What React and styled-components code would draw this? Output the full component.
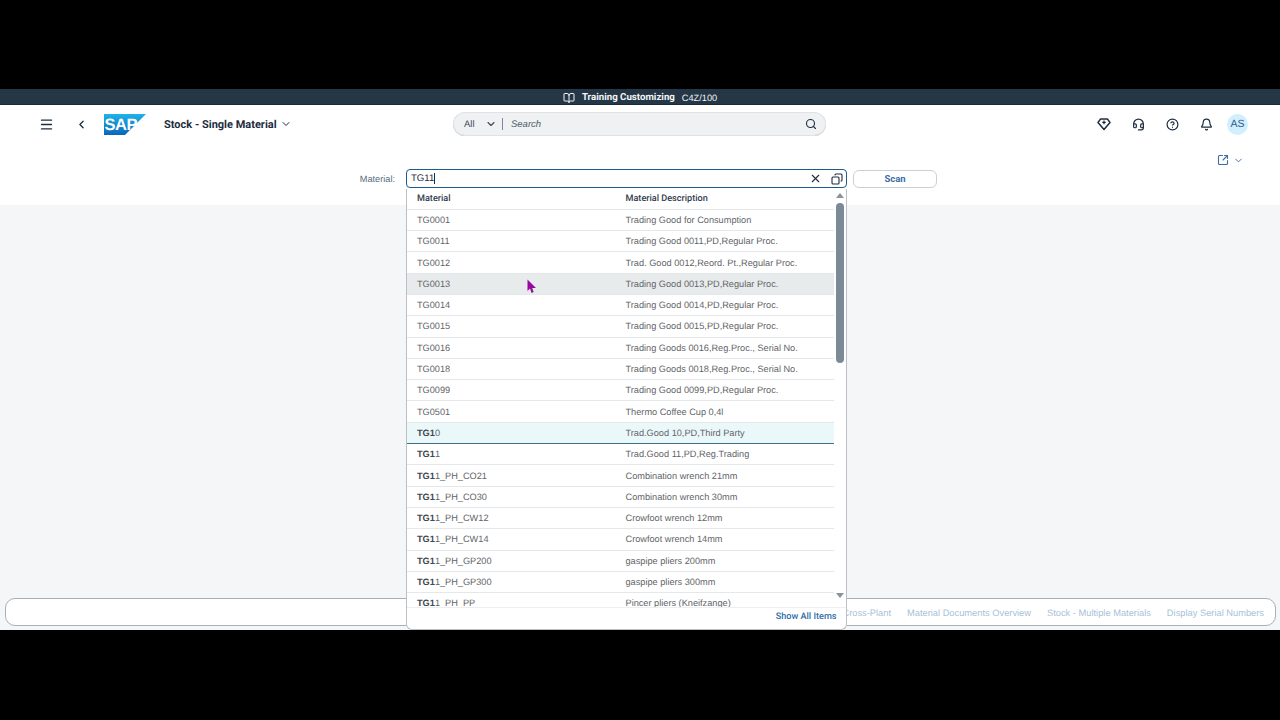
import React from 'react'
import styled, { createGlobalStyle } from 'styled-components'
import { Menu, ChevronLeft, ChevronDown, BookOpen, Search, Headset, CircleHelp, Bell, SquareArrowOutUpRight, X, Copy } from 'lucide-react'

const GlobalStyle = createGlobalStyle`
    html, body {
        margin: 0;
        padding: 0;
        background: #000;
        font-family: "Liberation Sans", Arial, sans-serif;
        text-rendering: geometricPrecision;
    }
`

const rows = [
    { id: 'TG0001', text: 'Trading Good for Consumption' },
    { id: 'TG0011', text: 'Trading Good 0011,PD,Regular Proc.' },
    { id: 'TG0012', text: 'Trad. Good 0012,Reord. Pt.,Regular Proc.' },
    { id: 'TG0013', text: 'Trading Good 0013,PD,Regular Proc.', state: 'hover' },
    { id: 'TG0014', text: 'Trading Good 0014,PD,Regular Proc.' },
    { id: 'TG0015', text: 'Trading Good 0015,PD,Regular Proc.' },
    { id: 'TG0016', text: 'Trading Goods 0016,Reg.Proc., Serial No.' },
    { id: 'TG0018', text: 'Trading Goods 0018,Reg.Proc., Serial No.' },
    { id: 'TG0099', text: 'Trading Good 0099,PD,Regular Proc.' },
    { id: 'TG0501', text: 'Thermo Coffee Cup 0,4l' },
    { id: '0', bold: 'TG1', text: 'Trad.Good 10,PD,Third Party', state: 'selected' },
    { id: '1', bold: 'TG1', text: 'Trad.Good 11,PD,Reg.Trading' },
    { id: '1_PH_CO21', bold: 'TG1', text: 'Combination wrench 21mm' },
    { id: '1_PH_CO30', bold: 'TG1', text: 'Combination wrench 30mm' },
    { id: '1_PH_CW12', bold: 'TG1', text: 'Crowfoot wrench 12mm' },
    { id: '1_PH_CW14', bold: 'TG1', text: 'Crowfoot wrench 14mm' },
    { id: '1_PH_GP200', bold: 'TG1', text: 'gaspipe pliers 200mm' },
    { id: '1_PH_GP300', bold: 'TG1', text: 'gaspipe pliers 300mm' },
    { id: '1_PH_PP', bold: 'TG1', text: 'Pincer pliers (Kneifzange)' },
]

const footerLinks = ['Stock - Cross-Plant', 'Material Documents Overview', 'Stock - Multiple Materials', 'Display Serial Numbers']

const SapLogo = () => (
    <svg width="42" height="21" viewBox="0 0 42 21">
        <defs>
            <linearGradient id="sapBlue" x1="0" y1="0" x2="0" y2="1">
                <stop offset="0" stopColor="#1fb3e8" />
                <stop offset="1" stopColor="#0b66b8" />
            </linearGradient>
        </defs>
        <polygon points="0,0 42,0 21,21 0,21" fill="url(#sapBlue)" />
        <text x="0.5" y="15.5" fill="#fff" fontFamily="Liberation Sans" fontWeight="700" fontSize="16.5" letterSpacing="-0.5">SAP</text>
    </svg>
)

const DiamondPlus = () => (
    <svg width="14" height="14" viewBox="0 0 14 14" fill="none" stroke="#1d2d3e" strokeWidth="1.5" strokeLinejoin="round">
        <path d="M3.6 2h6.8l2.6 3.4L7 12.5 1 5.4z" />
        <path d="M7 3.6v3.6M5.2 5.4h3.6" strokeWidth="1.2" />
    </svg>
)

const App = () => {
    return (
        <Screen>
            <GlobalStyle />
            <ShellBar>
                <BookOpen size={12} color="#f2f5f7" />
                <ShellTitle>Training Customizing</ShellTitle>
                <ShellSystem>C4Z/100</ShellSystem>
            </ShellBar>
            <Header>
                <HeaderLeft>
                    <Menu size={15} color="#1d2d3e" strokeWidth={2.2} />
                    <BackIcon size={13} color="#1d2d3e" strokeWidth={2.4} />
                    <LogoSlot><SapLogo /></LogoSlot>
                    <AppTitle>Stock - Single Material</AppTitle>
                    <ChevronDown size={12} color="#1d2d3e" strokeWidth={2} />
                </HeaderLeft>
                <SearchBox>
                    <ScopeLabel>All</ScopeLabel>
                    <ChevronDown size={12} color="#3b4a58" strokeWidth={2.2} />
                    <SearchDivider />
                    <SearchHint>Search</SearchHint>
                    <Search size={12} color="#1d2d3e" strokeWidth={2.2} />
                </SearchBox>
                <HeaderRight>
                    <DiamondPlus />
                    <Headset size={13} color="#1d2d3e" strokeWidth={2.2} />
                    <CircleHelp size={13} color="#1d2d3e" strokeWidth={2.2} />
                    <Bell size={13} color="#1d2d3e" strokeWidth={2.2} />
                    <Avatar>AS</Avatar>
                </HeaderRight>
            </Header>
            <SubHeader>
                <ShareRow>
                    <SquareArrowOutUpRight size={12} color="#3a6ea5" strokeWidth={2.2} />
                    <ChevronDown size={11} color="#3a6ea5" strokeWidth={2} />
                </ShareRow>
                <FormRow>
                    <FieldLabel>Material:</FieldLabel>
                    <Field>
                        <FieldValue>TG11<Caret /></FieldValue>
                        <X size={13} color="#1d2d3e" strokeWidth={2} />
                        <CopyIcon size={12} color="#1d2d3e" strokeWidth={2.2} />
                        <Popover>
                            <ListArea>
                                <Table>
                                    <HeadRow>
                                        <HeadCell>Material</HeadCell>
                                        <HeadCell>Material Description</HeadCell>
                                    </HeadRow>
                                    {rows.map((row) => (
                                        <Row key={row.bold ? row.bold + row.id : row.id} $state={row.state}>
                                            <Cell>{row.bold && <b>{row.bold}</b>}{row.id}</Cell>
                                            <Cell>{row.text}</Cell>
                                        </Row>
                                    ))}
                                </Table>
                                <Scrollbar>
                                    <ArrowUp />
                                    <Thumb />
                                    <ArrowDown />
                                </Scrollbar>
                            </ListArea>
                            <PopoverFooter>Show All Items</PopoverFooter>
                        </Popover>
                    </Field>
                    <ScanButton>Scan</ScanButton>
                </FormRow>
            </SubHeader>
            <Content>
                <LinkBar>
                    {footerLinks.map((link) => <LinkItem key={link}>{link}</LinkItem>)}
                </LinkBar>
            </Content>
            <Cursor width="10" height="15" viewBox="0 0 10 15">
                <polygon points="0.5,0.5 0.5,12 3,9.6 4.6,14 6.6,13 5.2,9 9,9" fill="#96089f" />
            </Cursor>
        </Screen>
    )
}

const Screen = styled.div`
    position: relative;
    box-sizing: border-box;
    width: 1280px;
    height: 720px;
    padding: 89px 0 90px;
    display: flex;
    flex-direction: column;
    background: #000;
    overflow: hidden;
`

const ShellBar = styled.div`
    height: 16px;
    flex: none;
    display: flex;
    align-items: center;
    justify-content: center;
    gap: 7px;
    background: #253746;
    border-bottom: 1px solid #1b2a36;
    box-sizing: border-box;
    color: #f2f5f7;
    padding-top: 2px;
`

const ShellTitle = styled.span`
    font-family: Roboto, sans-serif;
    font-size: 9.7px;
    font-weight: 700;
`

const ShellSystem = styled.span`
    font-size: 9.2px;
    font-weight: 400;
`

const Header = styled.div`
    height: 43px;
    flex: none;
    display: grid;
    grid-template-columns: 414px 373px 1fr;
    align-items: center;
    box-sizing: border-box;
    padding: 0 32px 5px 39px;
    background: #fff;
`

const HeaderLeft = styled.div`
    display: flex;
    align-items: center;
`

const BackIcon = styled(ChevronLeft)`
    margin-left: 21px;
`

const LogoSlot = styled.div`
    display: flex;
    margin: 0 18px 0 16px;
`

const AppTitle = styled.span`
    font-family: Roboto, sans-serif;
    font-size: 11px;
    font-weight: 700;
    color: #1d2d3e;
    margin-right: 3px;
`

const SearchBox = styled.div`
    height: 24px;
    display: flex;
    align-items: center;
    box-sizing: border-box;
    padding: 0 9px 0 11px;
    background: #eff1f2;
    border-radius: 12px;
    box-shadow: inset 0 0 0 1px #dfe3e6, inset 0 -1px 0 #a9b4be;
`

const ScopeLabel = styled.span`
    font-size: 9.5px;
    color: #3b4a58;
    width: 21px;
`

const SearchDivider = styled.span`
    width: 1px;
    height: 12px;
    background: #7f8b97;
    margin: 0 8px 0 5px;
`

const SearchHint = styled.span`
    flex: 1;
    font-size: 9.5px;
    font-style: italic;
    color: #4c5b69;
`

const HeaderRight = styled.div`
    display: flex;
    align-items: center;
    justify-content: flex-end;
    gap: 21px;
`

const Avatar = styled.div`
    width: 21px;
    height: 21px;
    margin-left: -7px;
    border-radius: 50%;
    display: flex;
    align-items: center;
    justify-content: center;
    background: #d1efff;
    color: #346187;
    font-size: 10.5px;
`

const SubHeader = styled.div`
    height: 57px;
    flex: none;
    box-sizing: border-box;
    background: #fff;
    display: flex;
    flex-direction: column;
`

const ShareRow = styled.div`
    height: 21px;
    display: flex;
    align-items: flex-end;
    justify-content: flex-end;
    gap: 4px;
    padding: 0 36px 3px 0;
    box-sizing: border-box;
`

const FormRow = styled.div`
    display: flex;
    align-items: center;
    height: 19px;
`

const FieldLabel = styled.span`
    width: 395px;
    margin-right: 11px;
    text-align: right;
    font-size: 9.2px;
    color: #556b82;
`

const Field = styled.div`
    position: relative;
    width: 441px;
    height: 19px;
    box-sizing: border-box;
    display: flex;
    align-items: center;
    gap: 9px;
    padding: 0 3px 0 4px;
    background: #fff;
    border: 1.5px solid #1f5a8c;
    border-radius: 4px;
`

const FieldValue = styled.div`
    flex: 1;
    display: flex;
    align-items: center;
    font-size: 9.6px;
    color: #1d2d3e;
`

const Caret = styled.span`
    width: 1px;
    height: 11px;
    background: #1d2d3e;
`

const CopyIcon = styled(Copy)`
    transform: scaleX(-1);
`

const ScanButton = styled.button`
    width: 84px;
    height: 18px;
    margin-left: 6px;
    padding: 0;
    box-sizing: border-box;
    background: #fff;
    border: 1px solid #c9d0d6;
    border-radius: 6px;
    font-family: Roboto, sans-serif;
    font-size: 9.5px;
    font-weight: 700;
    color: #3a6ea5;
`

const Popover = styled.div`
    position: absolute;
    top: 18.5px;
    left: -1.5px;
    width: 441px;
    height: 441px;
    display: flex;
    flex-direction: column;
    box-sizing: border-box;
    background: #fff;
    border: 1px solid #b9c0c6;
    border-top: 0;
    border-radius: 0 0 6px 6px;
    overflow: hidden;
    z-index: 2;
`

const ListArea = styled.div`
    position: relative;
    height: 419px;
    flex: none;
    overflow: hidden;
    border-bottom: 1px solid #eceef0;
    box-sizing: border-box;
`

const Table = styled.div`
    width: 427px;
`

const HeadRow = styled.div`
    display: grid;
    grid-template-columns: 208.5px 1fr;
    align-items: center;
    height: 21.3px;
    padding: 1px 0 0 10.5px;
    box-sizing: border-box;
    border-bottom: 1px solid #e5e8ea;
`

const HeadCell = styled.span`
    font-family: Roboto, sans-serif;
    font-size: 9.1px;
    font-weight: 500;
    color: #32404e;
`

const Row = styled.div`
    display: grid;
    grid-template-columns: 208.5px 1fr;
    align-items: center;
    height: 21.3px;
    padding-left: 10.5px;
    box-sizing: border-box;
    background: ${(p) => (p.$state === 'hover' ? '#e8ebeb' : p.$state === 'selected' ? '#ebf8fa' : '#fff')};
    border-bottom: 1px solid ${(p) => (p.$state === 'selected' ? '#3d6f86' : '#e5e8ea')};
`

const Cell = styled.span`
    font-size: 9.2px;
    color: #5f6468;

    b {
        font-weight: 700;
        color: #3d4853;
    }
`

const Scrollbar = styled.div`
    position: absolute;
    top: 0;
    right: 0;
    width: 12px;
    height: 100%;
    background: #fff;
`

const ArrowUp = styled.div`
    position: absolute;
    top: 4px;
    left: 2px;
    border: 4px solid transparent;
    border-top: 0;
    border-bottom: 5px solid #8a929a;
`

const ArrowDown = styled.div`
    position: absolute;
    top: 404px;
    left: 2px;
    border: 4px solid transparent;
    border-bottom: 0;
    border-top: 5px solid #8a929a;
`

const Thumb = styled.div`
    position: absolute;
    top: 14px;
    left: 2.5px;
    width: 8px;
    height: 160px;
    background: #7c8a98;
    border-radius: 4px;
`

const PopoverFooter = styled.div`
    flex: 1;
    display: flex;
    align-items: center;
    justify-content: flex-end;
    padding: 0 9px 2px 0;
    font-family: Roboto, sans-serif;
    font-size: 9.1px;
    font-weight: 500;
    color: #2f6ea8;
`

const Content = styled.div`
    flex: 1;
    display: flex;
    flex-direction: column;
    justify-content: flex-end;
    padding: 0 4px 4px 5px;
    background: #f5f6f7;
`

const LinkBar = styled.div`
    height: 28px;
    box-sizing: border-box;
    display: flex;
    align-items: center;
    justify-content: flex-end;
    gap: 16px;
    padding: 1px 11px 0 0;
    background: #fff;
    border: 1px solid #a9afb5;
    border-radius: 10px;
`

const LinkItem = styled.span`
    font-size: 9.3px;
    color: #a9bfd8;
`

const Cursor = styled.svg`
    position: absolute;
    left: 527px;
    top: 279px;
    z-index: 3;
`

export default App
